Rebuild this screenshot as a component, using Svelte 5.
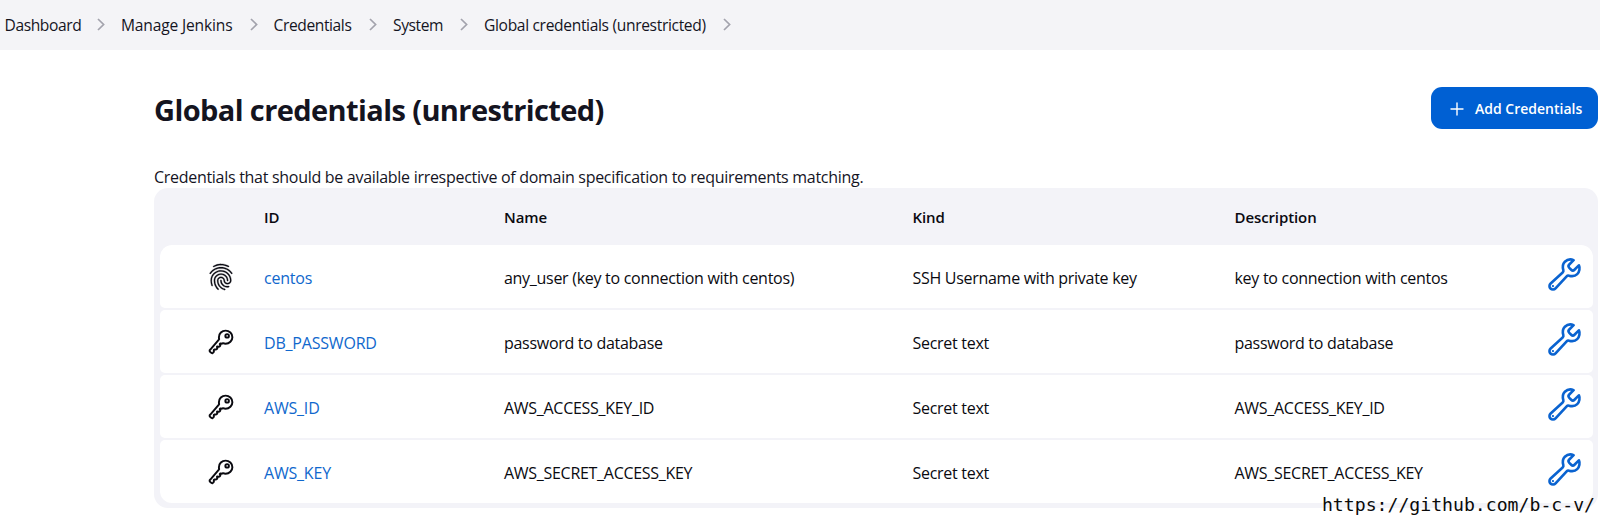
<script>
  const crumbs = [
    { label: 'Dashboard', width: 92.5, spacing: -0.4 },
    { label: 'Manage Jenkins', width: 128.5, spacing: -0.17 },
    { label: 'Credentials', width: 95.5, spacing: -0.4 },
    { label: 'System', width: 67, spacing: -0.4 },
    { label: 'Global credentials (unrestricted)', width: 239, spacing: -0.34 }
  ];
  const rows = [
    { type: 'finger', id: 'centos', name: 'any_user (key to connection with centos)', kind: 'SSH Username with private key', description: 'key to connection with centos' },
    { type: 'key', id: 'DB_PASSWORD', name: 'password to database', kind: 'Secret text', description: 'password to database' },
    { type: 'key', id: 'AWS_ID', name: 'AWS_ACCESS_KEY_ID', kind: 'Secret text', description: 'AWS_ACCESS_KEY_ID' },
    { type: 'key', id: 'AWS_KEY', name: 'AWS_SECRET_ACCESS_KEY', kind: 'Secret text', description: 'AWS_SECRET_ACCESS_KEY' }
  ];
</script>

<nav class="breadcrumbs">
  {#each crumbs as c}
    <span class="crumb" style="width: {c.width}px; letter-spacing: {c.spacing}px">{c.label}</span>
    <svg class="chevron" viewBox="0 0 8 13"><path d="M1 1l5.6 5.5L1 12" /></svg>
  {/each}
</nav>

<main>
  <header class="top">
    <h1>Global credentials (unrestricted)</h1>
    <button>
      <svg class="plus" viewBox="0 0 14 14"><path d="M7 1v12M1 7h12" /></svg>
      Add Credentials
    </button>
  </header>
  <p class="intro">Credentials that should be available irrespective of domain specification to requirements matching.</p>

  <section class="table">
    <div class="row head">
      <span></span><span>ID</span><span>Name</span><span>Kind</span><span>Description</span>
    </div>
    <div class="body">
      {#each rows as r}
        <div class="row item">
          <span class="type">
            {#if r.type === 'finger'}
              <svg class="finger" viewBox="0 0 512 512">
                <path d="M390.42 75.28a10.45 10.45 0 01-5.32-1.44C340.72 50.08 302.35 40 256.35 40c-45.77 0-89.23 11.28-128.76 33.84C122 77 115.11 74.8 111.87 69a12.4 12.4 0 014.63-16.32A281.81 281.81 0 01256.35 16c49.23 0 92.23 11.28 139.39 36.48a12 12 0 014.85 16.08 11.3 11.3 0 01-10.17 6.72zm-330.79 126a11.73 11.73 0 01-6.7-2.16 12.26 12.26 0 01-2.78-16.8c22.89-33.6 52-60 86.69-78.48 72.58-38.84 165.51-39.12 238.32-.24 34.68 18.48 63.8 44.64 86.69 78a12.29 12.29 0 01-2.78 16.8 11.26 11.26 0 01-16.18-2.88c-20.8-30.24-47.16-54-78.36-70.56-66.34-35.28-151.18-35.28-217.29.24-31.44 16.8-57.79 40.8-78.59 71a10 10 0 01-9.02 5.08zM204.1 491a10.66 10.66 0 01-8.09-3.6C175.9 466.48 165 453 149.55 424c-16-29.52-24.27-65.52-24.27-104.16 0-71.28 58.94-129.36 131.31-129.36S387.9 248.56 387.9 319.84a11.56 11.56 0 11-23.11 0c0-58.08-48.54-105.36-108.2-105.36s-108.2 47.28-108.2 105.36c0 34.56 7.4 66.48 21.49 92.4 14.8 27.6 25 39.36 42.77 58.08a12.67 12.67 0 010 16.8A12.49 12.49 0 01204.1 491zM369.85 446.44c-27.51 0-51.78-7.2-71.66-21.36a129.1 129.1 0 01-55-105.36 11.57 11.57 0 1123.12 0 104.28 104.28 0 0044.84 85.44c16.41 11.52 35.6 17 58.72 17a147.41 147.41 0 0024-2.4c6.24-1.2 12.25 3.12 13.4 9.84a11.92 11.92 0 01-9.47 13.92 152.28 152.28 0 01-27.95 2.88zM323.38 496a13 13 0 01-3-.48c-36.76-10.56-60.8-24.72-86-50.4-32.37-33.36-50.16-77.76-50.16-125.28 0-38.88 31.9-70.56 71.19-70.56s71.2 31.68 71.2 70.56c0 25.68 21.5 46.56 48.08 46.56s48.08-20.88 48.08-46.56c0-90.48-75.13-163.92-167.59-163.92-65.65 0-125.75 37.92-152.79 96.72-9 19.44-13.64 42.24-13.64 67.2 0 18.72 1.61 48.24 15.48 86.64 2.32 6.24-.69 13.2-6.7 15.36a11.34 11.34 0 01-14.79-7 276.39 276.39 0 01-16.88-95c0-28.8 5.32-55 15.72-77.76 30.75-67 98.94-110.4 173.6-110.4 105.18 0 190.71 84.24 190.71 187.92 0 38.88-31.9 70.56-71.2 70.56s-71.2-31.68-71.2-70.56C303.5 293.92 282 273 255.42 273s-48.08 20.88-48.08 46.56c0 41 15.26 79.44 43.23 108.24 22 22.56 43 35 75.59 44.16 6.24 1.68 9.71 8.4 8.09 14.64a11.39 11.39 0 01-10.87 9.4z" />
              </svg>
            {:else}
              <svg class="key" viewBox="0 0 512 512">
                <path d="M218.1 167.17c0 13 0 25.6 4.1 37.4-43.1 50.6-156.9 184.3-167.5 194.5a20.17 20.17 0 00-6.7 15c0 8.5 5.2 16.7 9.6 21.3 6.6 6.9 34.8 33 40 28 15.4-15 18.5-19 24.8-25.2 9.5-9.3-1-28.3 2.3-36s6.8-9.2 12.5-10.4 15.8 2.9 23.7 3c8.3.1 12.8-3.4 19-9.2 5-4.6 8.6-8.9 8.7-15.6.2-9-12.8-20.9-3.1-30.4s23.7 6.2 34 5 22.8-15.5 24.1-21.6-11.7-21.8-9.7-30.7c.7-3 6.8-10 11.4-11s25 6.9 29.6 5.9c5.6-1.2 12.1-7.1 17.4-10.4 15.5 6.7 29.6 9.4 47.7 9.4 68.5 0 124-53.4 124-119.2S408.5 48 340 48s-121.9 53.37-121.9 119.17zM400 144a32 32 0 11-32-32 32 32 0 0132 32z" />
              </svg>
            {/if}
          </span>
          <a class="id">{r.id}</a>
          <span>{r.name}</span>
          <span>{r.kind}</span>
          <span>{r.description}</span>
          <svg class="wrench" viewBox="0 0 512 512">
            <path d="M393.87 190a32.1 32.1 0 01-45.25 0l-26.57-26.57a32.09 32.09 0 010-45.26L382.19 58a1 1 0 00-.3-1.64c-38.82-16.64-89.15-8.16-121.11 23.57-30.58 30.35-32.32 76-21.12 115.84a31.93 31.93 0 01-9.06 32.08L64 380a48.17 48.17 0 1068 68l153.86-167a31.93 31.93 0 0131.6-9.13c39.54 10.59 84.54 8.6 114.72-21.19 32.49-32 39.5-88.56 23.75-120.93a1 1 0 00-1.6-.26z" />
            <circle cx="96" cy="416" r="16" />
          </svg>
        </div>
      {/each}
    </div>
  </section>
</main>
<div class="watermark">https://github.com/b-c-v/</div>

<style>
  :global(body) {
    background: #fff;
    color: #14141f;
    font-family: "Open Sans", "Noto Sans", sans-serif;
    overflow: hidden;
  }
  svg { display: block; flex: none; fill: none; stroke: currentColor; }
  .breadcrumbs {
    display: flex;
    align-items: center;
    box-sizing: border-box;
    height: 50px;
    padding-left: 4.5px;
    background: #f4f4f7;
    font-size: 15.6px;
    white-space: nowrap;
  }
  .crumb { flex: none; line-height: 20px; padding-bottom: 1px; }
  .chevron { width: 8px; height: 13px; margin: 0 16px 1px 0; color: #a3a3ad; stroke-width: 1.7; }
  main { padding: 37px 2px 0 154px; }
  .top { display: flex; align-items: center; justify-content: space-between; height: 42px; }
  h1 { margin: 3px 0 0; font-size: 29px; line-height: 40px; font-weight: 700; letter-spacing: -0.6px; }
  button {
    display: flex;
    align-items: center;
    gap: 11px;
    box-sizing: border-box;
    width: 167px;
    height: 42px;
    padding: 2px 0 0 19px;
    border: 0;
    border-radius: 11px;
    background: #0060d3;
    color: #fff;
    font: 600 14px/20px "Open Sans", sans-serif;
    white-space: nowrap;
  }
  .plus { width: 14px; height: 14px; stroke-width: 1.4; stroke-linecap: round; }
  .intro { margin: 36px 0 0; height: 23px; font-size: 16px; line-height: 24px; letter-spacing: -0.29px; }
  .table { box-sizing: border-box; height: 320px; padding: 0 5px 0 6px; border-radius: 14px; background: #f3f3f8; color: #0a0a10; }
  .row { display: grid; grid-template-columns: 104px 240px 408.5px 322px 1fr 47.5px; align-items: center; white-space: nowrap; }
  .head { height: 57px; padding-top: 1px; box-sizing: border-box; font-size: 15px; font-weight: 600; letter-spacing: -0.1px; }
  .body { display: grid; gap: 2.5px; }
  .item {
    height: 62.5px;
    border-radius: 5px;
    background: #fff;
    font-size: 16px;
    letter-spacing: -0.29px;
  }
  .item:first-child { border-radius: 12px 12px 5px 5px; }
  .item:last-child { border-radius: 5px 5px 12px 12px; }
  .item > span:not(.type), .id { padding-top: 4px; }
  .id { color: #1068cd; letter-spacing: -0.2px; }
  .type { padding: 2px 0 0 46.5px; }
  .finger { width: 28px; height: 28px; fill: #0c0c14; stroke: #0c0c14; stroke-width: 5; }
  .key { width: 28px; height: 28px; stroke-width: 36; stroke-linejoin: round; }
  .wrench { width: 37px; height: 37px; margin-top: -3px; color: #0a63d0; stroke-width: 36; stroke-miterlimit: 10; }
  .wrench circle { fill: currentColor; stroke: none; }
  .watermark {
    position: absolute;
    right: 5px;
    bottom: 1px;
    color: #0a0a0a;
    font: 18.15px/22px "DejaVu Sans Mono", monospace;
    white-space: pre;
  }
</style>
